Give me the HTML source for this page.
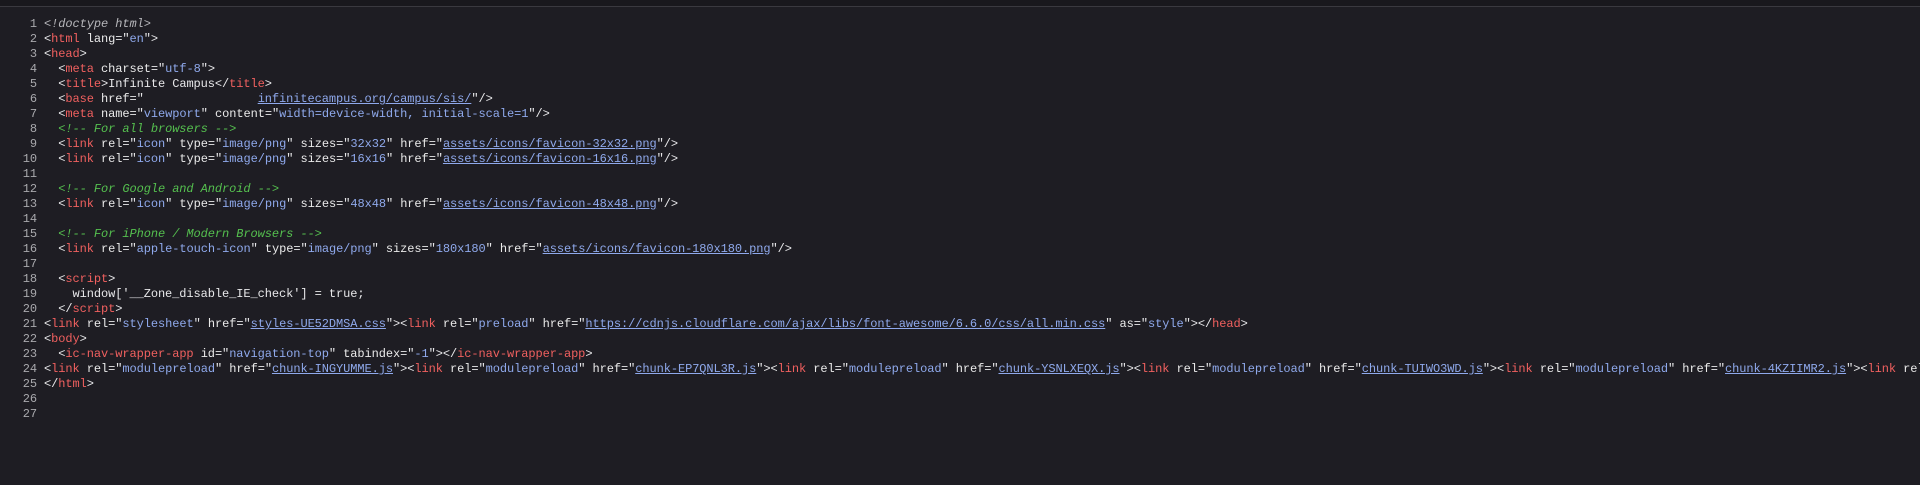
<!DOCTYPE html>
<html><head><meta charset="utf-8"><style>
html,body{margin:0;padding:0;background:#1e1d23;width:1920px;height:485px;overflow:hidden}
.top{position:absolute;left:0;top:0;width:1920px;height:6px;background:#19181d;border-bottom:1px solid #3a393f}
pre{position:absolute;left:0;top:17px;width:1920px;overflow:hidden;margin:0;font-family:"Liberation Mono",monospace;font-size:12px;letter-spacing:-0.08px;line-height:15px;color:#e8e8ea;white-space:pre}
.n{display:inline-block;width:37px;text-align:right;color:#a9a9ad;margin-right:7px}
.t{color:#f0605f}
.a{color:#eaeaea}
.v{color:#8fa9ec}
.u{color:#8fa9ec;text-decoration:underline}
.c{color:#55c04f;font-style:italic}
.d{color:#b7b7bb;font-style:italic}
</style></head><body><div class="top"></div>
<pre><span class="n">1</span><span class="d">&lt;!doctype html&gt;</span>
<span class="n">2</span>&lt;<span class="t">html</span> <span class="a">lang</span>="<span class="v">en</span>"&gt;
<span class="n">3</span>&lt;<span class="t">head</span>&gt;
<span class="n">4</span>  &lt;<span class="t">meta</span> <span class="a">charset</span>="<span class="v">utf-8</span>"&gt;
<span class="n">5</span>  &lt;<span class="t">title</span>&gt;Infinite Campus&lt;/<span class="t">title</span>&gt;
<span class="n">6</span>  &lt;<span class="t">base</span> <span class="a">href</span>="                <span class="u">infinitecampus.org/campus/sis/</span>"/&gt;
<span class="n">7</span>  &lt;<span class="t">meta</span> <span class="a">name</span>="<span class="v">viewport</span>" <span class="a">content</span>="<span class="v">width=device-width, initial-scale=1</span>"/&gt;
<span class="n">8</span>  <span class="c">&lt;!-- For all browsers --&gt;</span>
<span class="n">9</span>  &lt;<span class="t">link</span> <span class="a">rel</span>="<span class="v">icon</span>" <span class="a">type</span>="<span class="v">image/png</span>" <span class="a">sizes</span>="<span class="v">32x32</span>" <span class="a">href</span>="<span class="u">assets/icons/favicon-32x32.png</span>"/&gt;
<span class="n">10</span>  &lt;<span class="t">link</span> <span class="a">rel</span>="<span class="v">icon</span>" <span class="a">type</span>="<span class="v">image/png</span>" <span class="a">sizes</span>="<span class="v">16x16</span>" <span class="a">href</span>="<span class="u">assets/icons/favicon-16x16.png</span>"/&gt;
<span class="n">11</span>
<span class="n">12</span>  <span class="c">&lt;!-- For Google and Android --&gt;</span>
<span class="n">13</span>  &lt;<span class="t">link</span> <span class="a">rel</span>="<span class="v">icon</span>" <span class="a">type</span>="<span class="v">image/png</span>" <span class="a">sizes</span>="<span class="v">48x48</span>" <span class="a">href</span>="<span class="u">assets/icons/favicon-48x48.png</span>"/&gt;
<span class="n">14</span>
<span class="n">15</span>  <span class="c">&lt;!-- For iPhone / Modern Browsers --&gt;</span>
<span class="n">16</span>  &lt;<span class="t">link</span> <span class="a">rel</span>="<span class="v">apple-touch-icon</span>" <span class="a">type</span>="<span class="v">image/png</span>" <span class="a">sizes</span>="<span class="v">180x180</span>" <span class="a">href</span>="<span class="u">assets/icons/favicon-180x180.png</span>"/&gt;
<span class="n">17</span>
<span class="n">18</span>  &lt;<span class="t">script</span>&gt;
<span class="n">19</span>    window['__Zone_disable_IE_check'] = true;
<span class="n">20</span>  &lt;/<span class="t">script</span>&gt;
<span class="n">21</span>&lt;<span class="t">link</span> <span class="a">rel</span>="<span class="v">stylesheet</span>" <span class="a">href</span>="<span class="u">styles-UE52DMSA.css</span>"&gt;&lt;<span class="t">link</span> <span class="a">rel</span>="<span class="v">preload</span>" <span class="a">href</span>="<span class="u">https://cdnjs.cloudflare.com/ajax/libs/font-awesome/6.6.0/css/all.min.css</span>" <span class="a">as</span>="<span class="v">style</span>"&gt;&lt;/<span class="t">head</span>&gt;
<span class="n">22</span>&lt;<span class="t">body</span>&gt;
<span class="n">23</span>  &lt;<span class="t">ic-nav-wrapper-app</span> <span class="a">id</span>="<span class="v">navigation-top</span>" <span class="a">tabindex</span>="<span class="v">-1</span>"&gt;&lt;/<span class="t">ic-nav-wrapper-app</span>&gt;
<span class="n">24</span>&lt;<span class="t">link</span> <span class="a">rel</span>="<span class="v">modulepreload</span>" <span class="a">href</span>="<span class="u">chunk-INGYUMME.js</span>"&gt;&lt;<span class="t">link</span> <span class="a">rel</span>="<span class="v">modulepreload</span>" <span class="a">href</span>="<span class="u">chunk-EP7QNL3R.js</span>"&gt;&lt;<span class="t">link</span> <span class="a">rel</span>="<span class="v">modulepreload</span>" <span class="a">href</span>="<span class="u">chunk-YSNLXEQX.js</span>"&gt;&lt;<span class="t">link</span> <span class="a">rel</span>="<span class="v">modulepreload</span>" <span class="a">href</span>="<span class="u">chunk-TUIWO3WD.js</span>"&gt;&lt;<span class="t">link</span> <span class="a">rel</span>="<span class="v">modulepreload</span>" <span class="a">href</span>="<span class="u">chunk-4KZIIMR2.js</span>"&gt;&lt;<span class="t">link</span> <span class="a">rel</span>="<span class="v">mod</span>
<span class="n">25</span>&lt;/<span class="t">html</span>&gt;
<span class="n">26</span>
<span class="n">27</span>
</pre></body></html>
